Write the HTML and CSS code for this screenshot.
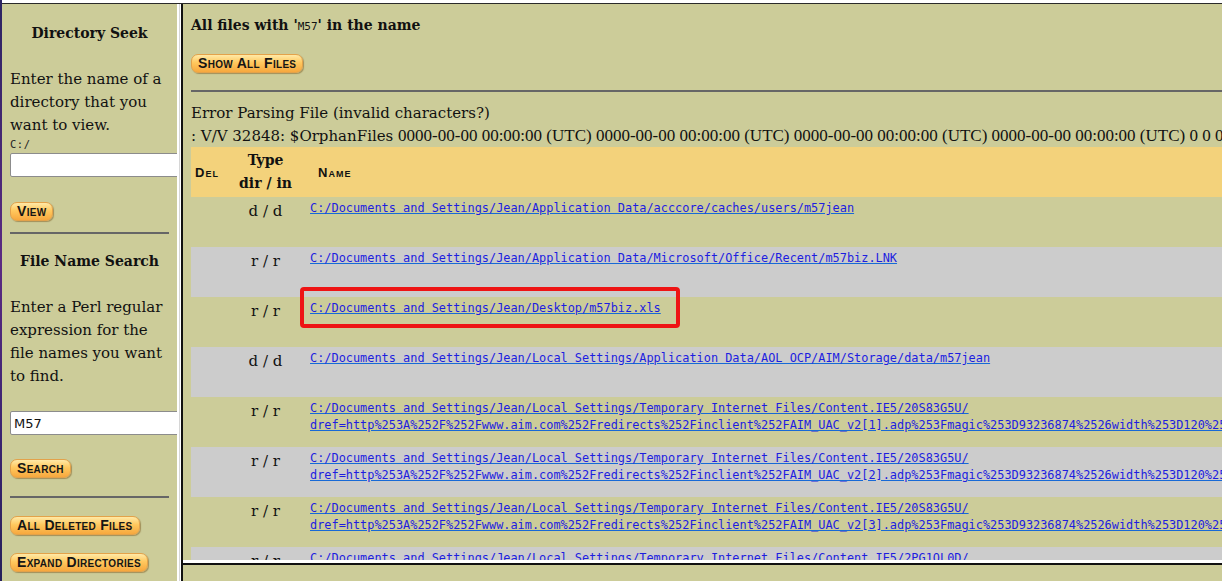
FILE: index.html
```html
<!DOCTYPE html>
<html lang="en">
<head>
<meta charset="utf-8">
<title>Autopsy File Name Search</title>
<link rel="stylesheet" href="styles.css">
</head>
<body>
<div class="desk"></div>
<div class="window">
  <div class="topbar"></div>
  <div class="frames">
    <aside class="side">
      <h2 class="side-title">Directory Seek</h2>
      <p class="side-text">Enter the name of a directory that you want to view.</p>
      <div class="path">C:/</div>
      <input class="field" type="text" value="">
      <span class="btn btn-view">View</span>
      <hr class="rule rule-top">
      <h2 class="side-title title-search">File Name Search</h2>
      <p class="side-text">Enter a Perl regular expression for the file names you want to find.</p>
      <input class="field" type="text" value="M57">
      <span class="btn btn-search">Search</span>
      <hr class="rule rule-bottom">
      <span class="btn btn-stack">All Deleted Files</span>
      <span class="btn btn-stack">Expand Directories</span>
    </aside>
    <div class="vsep"></div>
    <div class="right">
      <main class="main">
        <h1 class="main-title">All files with '<tt class="term">M57</tt>' in the name</h1>
        <span class="btn btn-show">Show All Files</span>
        <hr class="rule main-rule">
        <div class="err">Error Parsing File (invalid characters?)</div>
        <div class="raw">: V/V 32848: $OrphanFiles <span class="ts">0000-00-00 00:00:00 (UTC) 0000-00-00 00:00:00 (UTC) 0000-00-00 00:00:00 (UTC) 0000-00-00 00:00:00 (UTC) 0 0 0 0 0 0 0 0</span></div>
        <table class="files">
          <thead>
            <tr>
              <th class="c-del">Del</th>
              <th class="c-type">Type<br>dir / in</th>
              <th class="c-name">Name</th>
            </tr>
          </thead>
          <tbody>
            <tr class="tan">
              <td class="c-del"></td>
              <td class="c-type">d / d</td>
              <td class="c-name"><a href="#">C:/Documents and Settings/Jean/Application Data/acccore/caches/users/m57jean</a></td>
            </tr>
            <tr class="grey">
              <td class="c-del"></td>
              <td class="c-type">r / r</td>
              <td class="c-name"><a href="#">C:/Documents and Settings/Jean/Application Data/Microsoft/Office/Recent/m57biz.LNK</a></td>
            </tr>
            <tr class="tan">
              <td class="c-del"></td>
              <td class="c-type">r / r</td>
              <td class="c-name"><a href="#">C:/Documents and Settings/Jean/Desktop/m57biz.xls</a></td>
            </tr>
            <tr class="grey">
              <td class="c-del"></td>
              <td class="c-type">d / d</td>
              <td class="c-name"><a href="#">C:/Documents and Settings/Jean/Local Settings/Application Data/AOL OCP/AIM/Storage/data/m57jean</a></td>
            </tr>
            <tr class="tan">
              <td class="c-del"></td>
              <td class="c-type">r / r</td>
              <td class="c-name"><a href="#">C:/Documents and Settings/Jean/Local Settings/Temporary Internet Files/Content.IE5/20S83G5U/<br>dref=http%253A%252F%252Fwww.aim.com%252Fredirects%252Finclient%252FAIM_UAC_v2[1].adp%253Fmagic%253D93236874%2526width%253D120%2526height%253D90[1].htm</a></td>
            </tr>
            <tr class="grey">
              <td class="c-del"></td>
              <td class="c-type">r / r</td>
              <td class="c-name"><a href="#">C:/Documents and Settings/Jean/Local Settings/Temporary Internet Files/Content.IE5/20S83G5U/<br>dref=http%253A%252F%252Fwww.aim.com%252Fredirects%252Finclient%252FAIM_UAC_v2[2].adp%253Fmagic%253D93236874%2526width%253D120%2526height%253D90[1].htm</a></td>
            </tr>
            <tr class="tan">
              <td class="c-del"></td>
              <td class="c-type">r / r</td>
              <td class="c-name"><a href="#">C:/Documents and Settings/Jean/Local Settings/Temporary Internet Files/Content.IE5/20S83G5U/<br>dref=http%253A%252F%252Fwww.aim.com%252Fredirects%252Finclient%252FAIM_UAC_v2[3].adp%253Fmagic%253D93236874%2526width%253D120%2526height%253D90[1].htm</a></td>
            </tr>
            <tr class="grey">
              <td class="c-del"></td>
              <td class="c-type">r / r</td>
              <td class="c-name"><a href="#">C:/Documents and Settings/Jean/Local Settings/Temporary Internet Files/Content.IE5/2PG1OL0D/<br>dref=http%253A%252F%252Fwww.aim.com%252Fredirects%252Finclient%252FAIM_UAC_v2[1].adp%253Fmagic%253D93236874%2526width%253D120%2526height%253D90[1].htm</a></td>
            </tr>
          </tbody>
        </table>
        <div class="highlight"></div>
      </main>
      <div class="hsep"></div>
      <div class="bottom"></div>
    </div>
  </div>
</div>
</body>
</html>
```

FILE: styles.css
```css
* { box-sizing: border-box; }

html, body {
  margin: 0;
  padding: 0;
}

body {
  width: 1222px;
  height: 581px;
  overflow: hidden;
  display: flex;
  font-family: "DejaVu Serif", serif;
  font-size: 15px;
  color: #111;
  background: #ffffff;
}

.desk {
  width: 2px;
  flex: none;
  background: linear-gradient(#2c2462, #5b2a82 45%, #3a2470 75%, #27205a);
}

.window {
  flex: 1;
  min-width: 0;
  display: flex;
  flex-direction: column;
}

.topbar {
  height: 4px;
  flex: none;
  background: #fff;
  border-bottom: 1px solid #2a2a2a;
}

.frames {
  flex: 1;
  min-height: 0;
  display: flex;
}

/* ---------- left frame ---------- */
.side {
  width: 175px;
  flex: none;
  overflow: hidden;
  background: #cccc99;
  padding: 18px 8px 0 8px;
  display: flex;
  flex-direction: column;
  align-items: flex-start;
}

.side-title {
  align-self: stretch;
  margin: 0;
  font-size: 14px;
  font-weight: bold;
  line-height: 23px;
  text-align: center;
}

.title-search { margin-top: 16px; }

.side-text {
  align-self: stretch;
  margin: 23px 0 0 0;
  font-size: 15px;
  line-height: 23px;
}

.path {
  font-family: "DejaVu Sans Mono", monospace;
  font-size: 10.5px;
  line-height: 14px;
  letter-spacing: 0.5px;
  color: #222;
}

.field {
  flex: none;
  width: 200px;
  height: 24px;
  margin: 2px 0 0 0;
  padding: 0 3px;
  border: 1px solid #8c8c8c;
  border-radius: 2px;
  background: #fff;
  font-family: "DejaVu Sans", sans-serif;
  font-size: 13px;
  color: #111;
}

.side-text + .field { margin-top: 23px; }

.btn {
  display: inline-block;
  flex: none;
  height: 19px;
  line-height: 17px;
  padding: 0 6px;
  border: 1px solid #e3a24a;
  border-radius: 7px;
  background: linear-gradient(#ffe9a6, #ffc85e 45%, #f7a83e);
  box-shadow: 1px 1px 1px rgba(110, 70, 10, 0.45);
  font-family: "Liberation Sans", Arial, sans-serif;
  font-weight: bold;
  font-size: 14px;
  font-variant: small-caps;
  letter-spacing: 0.3px;
  color: #151515;
  white-space: nowrap;
}

.btn-view { margin-top: 25px; }
.btn-search { margin-top: 24px; }
.btn-stack { margin-top: 18px; }

.rule {
  align-self: stretch;
  height: 2px;
  margin: 0;
  border: 0;
  background: #666;
}

.rule-top { margin-top: 11px; }
.rule-bottom { margin-top: 18px; }

/* ---------- separators ---------- */
.vsep {
  width: 4px;
  flex: none;
  background: linear-gradient(to right, #fff 0 2px, #d6d6d6 2px 3px, #fff 3px);
}

.right {
  flex: 1;
  min-width: 0;
  display: flex;
  flex-direction: column;
  border-left: 2px solid #111;
}

.hsep {
  height: 3px;
  flex: none;
  background: #fff;
}

.bottom {
  height: 18px;
  flex: none;
  background: #cccc99;
  border-top: 2px solid #111;
}

/* ---------- main frame ---------- */
.main {
  flex: 1;
  min-height: 0;
  overflow: hidden;
  position: relative;
  background: #cccc99;
  padding: 10px 0 0 8px;
}

.main-title {
  margin: 0;
  font-size: 14px;
  font-weight: bold;
  line-height: 23px;
}

.term {
  font-family: "DejaVu Sans Mono", monospace;
  font-size: 11px;
  font-weight: normal;
}

.btn-show { margin-top: 16px; }

.main-rule {
  display: block;
  margin-top: 17px;
}

.err {
  margin-top: 10px;
  line-height: 23px;
  font-size: 15px;
}

.raw {
  height: 22px;
  overflow: visible;
  font-size: 15px;
  line-height: 22px;
  white-space: nowrap;
}

.ts {
  font-family: "Liberation Serif", serif;
  font-size: 17px;
}

.files {
  table-layout: fixed;
  width: 1500px;
  border-collapse: collapse;
  border-spacing: 0;
}

.files thead tr {
  height: 50px;
  background: #f3d27b;
}

.files th {
  vertical-align: middle;
  padding: 0;
  text-align: left;
  font-family: "Liberation Sans", Arial, sans-serif;
  font-weight: bold;
  font-size: 13px;
  font-variant: small-caps;
  letter-spacing: 1px;
  white-space: nowrap;
}

.files th.c-del {
  width: 45px;
  padding-left: 4px;
}

.files th.c-type {
  width: 59px;
  text-align: center;
  font-family: "DejaVu Serif", serif;
  font-size: 14px;
  font-variant: normal;
  letter-spacing: 0;
  line-height: 23px;
}

.files th.c-name {
  padding-left: 23px;
}

.files tbody tr { height: 50px; }
.files tr.tan { background: #cccc99; }
.files tr.grey { background: #cccccc; }

.files td {
  vertical-align: top;
  padding: 3px 0 0 0;
}

.files td.c-type {
  text-align: center;
  font-size: 15px;
  line-height: 23px;
  white-space: nowrap;
}

.files td.c-name {
  padding-left: 15px;
  white-space: nowrap;
  overflow: hidden;
  font-family: "DejaVu Sans Mono", monospace;
  font-size: 11.9px;
  line-height: 17px;
}

.files a {
  color: #1d1de0;
  text-decoration: underline;
  text-decoration-color: #1769d6;
}

.highlight {
  position: absolute;
  left: 117px;
  top: 283px;
  width: 380px;
  height: 41px;
  border: 4px solid #ee1414;
  border-radius: 4px;
}
```
